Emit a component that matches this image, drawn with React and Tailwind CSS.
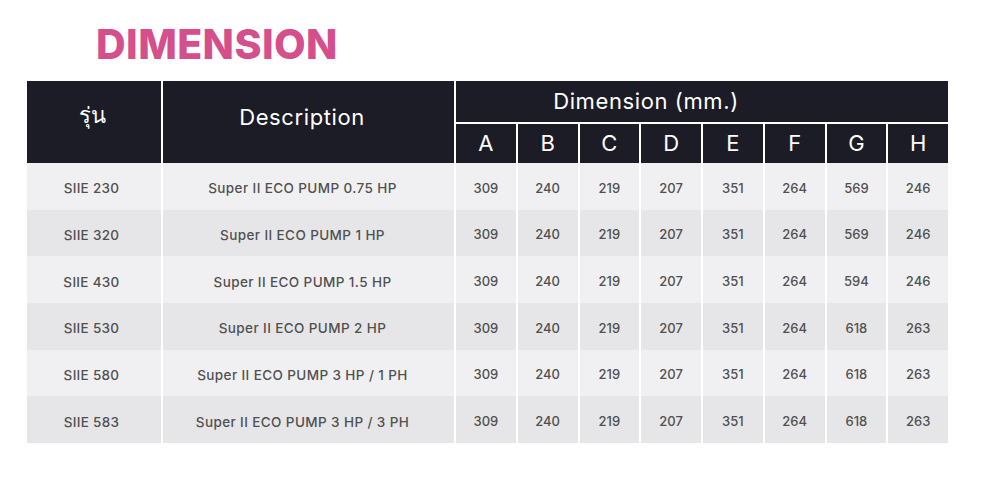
const rows = [
  { model: 'SIIE 230', desc: 'Super II ECO PUMP 0.75 HP', dims: [309, 240, 219, 207, 351, 264, 569, 246] },
  { model: 'SIIE 320', desc: 'Super II ECO PUMP 1 HP', dims: [309, 240, 219, 207, 351, 264, 569, 246] },
  { model: 'SIIE 430', desc: 'Super II ECO PUMP 1.5 HP', dims: [309, 240, 219, 207, 351, 264, 594, 246] },
  { model: 'SIIE 530', desc: 'Super II ECO PUMP 2 HP', dims: [309, 240, 219, 207, 351, 264, 618, 263] },
  { model: 'SIIE 580', desc: 'Super II ECO PUMP 3 HP / 1 PH', dims: [309, 240, 219, 207, 351, 264, 618, 263] },
  { model: 'SIIE 583', desc: 'Super II ECO PUMP 3 HP / 3 PH', dims: [309, 240, 219, 207, 351, 264, 618, 263] },
];

const letters = ['A', 'B', 'C', 'D', 'E', 'F', 'G', 'H'];

export default function App() {
  return (
    <div className="w-[1000px] h-[478px] bg-white overflow-hidden font-['Inter','Noto_Sans','Noto_Sans_CJK_SC',sans-serif]">
      <h1 className="pl-[96px] pt-[24px] h-[81px] text-[41px] leading-none font-extrabold text-[#d44f8b] tracking-[0.4px]">
        DIMENSION
      </h1>

      <div className="ml-[27px] w-[921px] grid grid-cols-[134px_291px_repeat(8,1fr)] gap-x-[2px]">
        {/* header */}
        <div className="row-span-2 bg-[#1b1c26] text-white text-[22px] flex items-center justify-center pb-[14px] pr-[4px]">รุ่น</div>
        <div className="row-span-2 bg-[#1b1c26] text-white text-[22px] tracking-[0.6px] flex items-center justify-center pb-[10px] pr-[13px]">Description</div>
        <div className="col-span-8 h-[43px] bg-[#1b1c26] text-white text-[22px] tracking-[0.6px] flex items-center justify-center pr-[112px] border-b-2 border-white">
          Dimension (mm.)
        </div>
        {letters.map((l) => (
          <div key={l} className="h-[39px] bg-[#1b1c26] text-white text-[22px] flex items-center justify-center">
            {l}
          </div>
        ))}

        {/* body */}
        {rows.map((r, i) => {
          const bg = i % 2 === 0 ? 'bg-[#f0f0f2]' : 'bg-[#e6e6e8]';
          return [
            <div key={r.model + 'm'} className={`${bg} h-[46.7px] pt-[4px] pr-[5px] flex items-center justify-center text-[13.5px] tracking-[0.3px] font-medium text-[#505050]`}>
              {r.model}
            </div>,
            <div key={r.model + 'd'} className={`${bg} h-[46.7px] pt-[4px] pr-[12px] flex items-center justify-center text-[13.5px] tracking-[0.4px] font-medium text-[#505050]`}>
              {r.desc}
            </div>,
            ...r.dims.map((d, j) => (
              <div key={r.model + j} className={`${bg} h-[46.7px] pt-[4px] flex items-center justify-center text-[13px] font-medium text-[#505050]`}>
                {d}
              </div>
            )),
          ];
        })}
      </div>
    </div>
  );
}
